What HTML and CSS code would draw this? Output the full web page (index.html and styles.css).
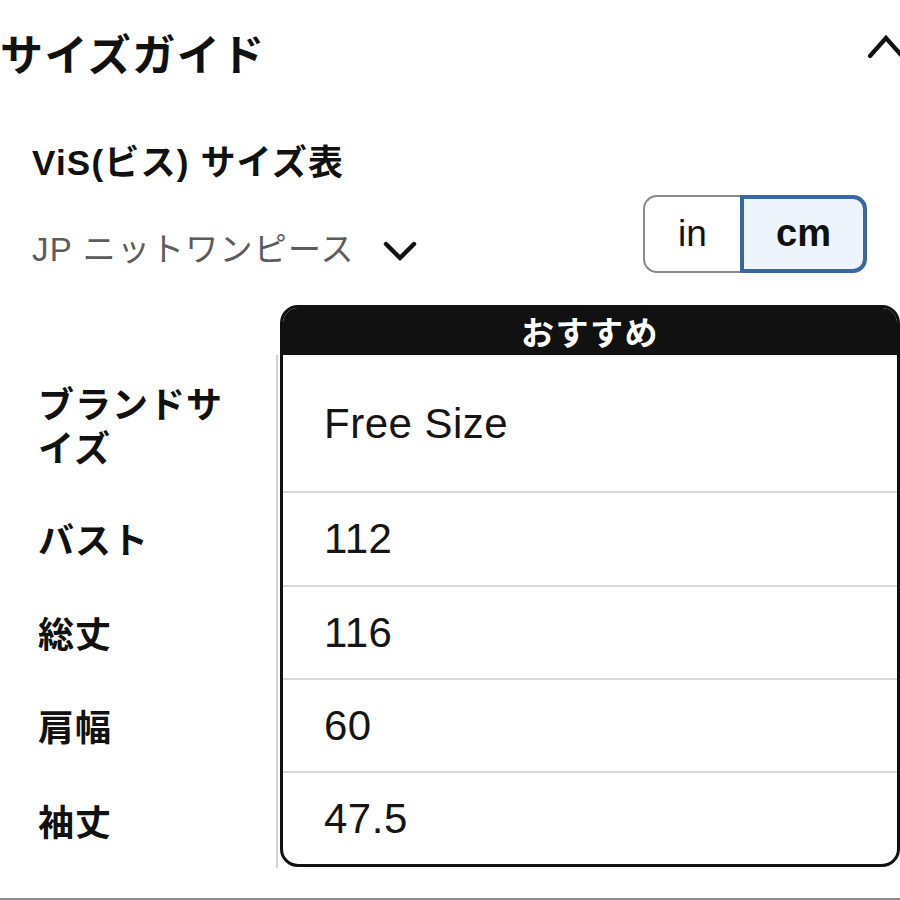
FILE: index.html
```html
<!DOCTYPE html>
<html lang="ja">
<head>
<meta charset="utf-8">
<title>サイズガイド</title>
<link rel="stylesheet" href="styles.css">
</head>
<body>
<section class="guide">
  <div class="guide-head">
    <h2 class="guide-title">サイズガイド</h2>
    <svg class="chev-up" width="32" height="26" viewBox="0 0 32 26" aria-hidden="true">
      <path d="M2 22 L18 4 L34 22" fill="none" stroke="#111" stroke-width="4.2" stroke-linecap="round" stroke-linejoin="miter"/>
    </svg>
  </div>

  <div class="brand">ViS(ビス) サイズ表</div>

  <div class="controls">
    <div class="dropdown">
      <span class="dropdown-text">JP ニットワンピース</span>
      <svg class="chev-down" width="34" height="22" viewBox="0 0 34 22" aria-hidden="true">
        <path d="M3 4 L17 18 L31 4" fill="none" stroke="#111" stroke-width="4.4" stroke-linecap="round" stroke-linejoin="miter"/>
      </svg>
    </div>
    <div class="unit-toggle">
      <span class="unit unit-in">in</span>
      <span class="unit unit-cm">cm</span>
    </div>
  </div>

  <div class="size-table">
    <div class="labels">
      <div class="label-row row-1">ブランドサイズ</div>
      <div class="label-row row-2">バスト</div>
      <div class="label-row row-3">総丈</div>
      <div class="label-row row-4">肩幅</div>
      <div class="label-row row-5">袖丈</div>
    </div>
    <div class="card">
      <div class="card-head">おすすめ</div>
      <div class="cell row-1">Free Size</div>
      <div class="cell row-2 sep">112</div>
      <div class="cell row-3 sep">116</div>
      <div class="cell row-4 sep">60</div>
      <div class="cell row-5 sep">47.5</div>
    </div>
  </div>
</section>
</body>
</html>
```

FILE: styles.css
```css
html, body {
  margin: 0;
  padding: 0;
  background: #ffffff;
  overflow: hidden;
}

body {
  width: 900px;
  font-family: "Liberation Sans", "Noto Sans CJK JP", sans-serif;
  color: #111111;
}

.guide {
  padding-bottom: 30px;
  border-bottom: 2px solid #8c8c8c;
}

.guide-head {
  height: 104px;
  display: flex;
  align-items: center;
  justify-content: space-between;
}

.guide-title {
  margin: 0;
  font-family: "Noto Sans CJK JP", sans-serif;
  font-size: 43px;
  font-weight: 700;
  line-height: 50px;
  letter-spacing: 1.5px;
  color: #111;
}

.chev-up {
  display: block;
  margin-top: -10px;
  overflow: hidden;
}

.brand {
  margin-top: 39px;
  padding-left: 32px;
  font-size: 35px;
  font-weight: 700;
  line-height: 40px;
  letter-spacing: 1.2px;
  color: #111;
}

.controls {
  margin-top: 12px;
  height: 78px;
  display: flex;
  align-items: flex-end;
  justify-content: space-between;
  padding-left: 32px;
  padding-right: 33px;
}

.dropdown {
  display: flex;
  align-items: center;
  gap: 28px;
  height: 40px;
  margin-bottom: 3px;
}

.dropdown-text {
  font-size: 33px;
  line-height: 40px;
  letter-spacing: 1.2px;
  color: #5c5c5c;
}

.chev-down {
  display: block;
  margin-top: 2px;
}

.unit-toggle {
  display: flex;
  height: 78px;
  align-self: stretch;
}

.unit {
  display: flex;
  align-items: center;
  justify-content: center;
  box-sizing: border-box;
  height: 78px;
  font-size: 37px;
  color: #111;
}

.unit-in {
  width: 97px;
  border: 2px solid #8a8a8a;
  border-right: none;
  border-radius: 14px 0 0 14px;
  background: #ffffff;
}

.unit-cm {
  width: 127px;
  border: 4px solid #3a66a3;
  border-radius: 0 14px 14px 0;
  background: #edf4fc;
  font-weight: 700;
  font-size: 38px;
  padding-bottom: 2px;
}

.size-table {
  margin-top: 32px;
  display: flex;
  align-items: flex-start;
}

.labels {
  width: 278px;
  padding-top: 50px;
  display: flex;
  flex-direction: column;
}

.label-row {
  box-sizing: border-box;
  display: flex;
  align-items: center;
  padding-left: 38px;
  padding-right: 40px;
  border-right: 2px solid #d4d4d4;
  font-family: "Noto Sans CJK JP", sans-serif;
  font-size: 36px;
  font-weight: 700;
  line-height: 44px;
  letter-spacing: 1px;
  color: #111;
}

.labels .row-1 { height: 136px; padding-top: 2px; }
.labels .row-2 { height: 94px; }
.labels .row-3 { height: 93px; }
.labels .row-4 { height: 93px; }
.labels .row-5 { height: 97px; }

.card {
  margin-left: 2px;
  width: 620px;
  box-sizing: border-box;
  border: 3px solid #111;
  border-radius: 18px;
  overflow: hidden;
  background: #fff;
}

.card-head {
  height: 47px;
  background: #111;
  color: #fff;
  text-align: center;
  font-family: "Noto Sans CJK JP", sans-serif;
  font-size: 33px;
  font-weight: 700;
  line-height: 47px;
  letter-spacing: 1.5px;
}

.cell {
  box-sizing: border-box;
  display: flex;
  align-items: center;
  padding-left: 41px;
  font-size: 42px;
  letter-spacing: 0.5px;
  color: #151515;
}

.cell.sep {
  border-top: 2px solid #d8d8d8;
}

.card .row-1 { height: 136px; padding-top: 2px; }
.card .row-2 { height: 94px; }
.card .row-3 { height: 93px; }
.card .row-4 { height: 93px; }
.card .row-5 { height: 93px; }
```
